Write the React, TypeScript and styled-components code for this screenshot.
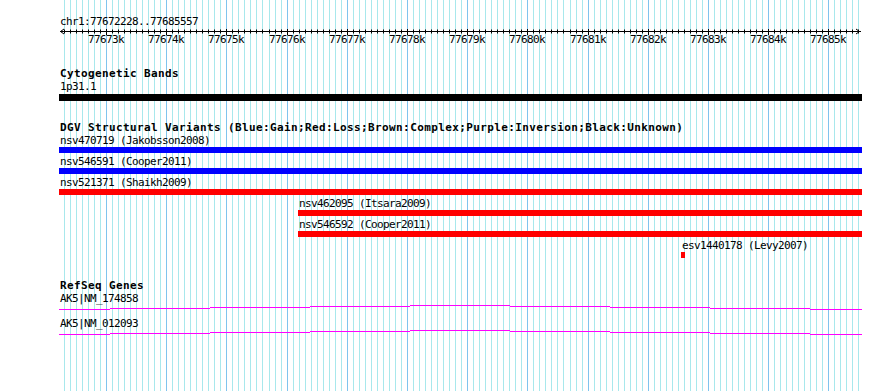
import React from "react";
import styled, { createGlobalStyle } from "styled-components";

const START = 77672228;
const END = 77685557;
const ORIGIN = 59;
const TRACK_WIDTH = 803;
const PX_PER_BP = 0.0602;

// page x of a base position, snapped to the pixel grid
const pageX = (pos: number) => Math.round(ORIGIN + 0.5 + (pos - START) * PX_PER_BP);

const GlobalStyle = createGlobalStyle`
  html, body {
    margin: 0;
    padding: 0;
    background: #ffffff;
  }
`;

const Page = styled.div`
  position: relative;
  width: 890px;
  height: 391px;
  overflow: hidden;
  background: #ffffff;
`;

const GridLayer = styled.svg`
  position: absolute;
  left: 0;
  top: 0;
  z-index: 0;
`;

const Tracks = styled.div`
  position: relative;
  z-index: 1;
  display: flex;
  flex-direction: column;
  width: ${TRACK_WIDTH}px;
  padding: 15px 0 0 ${ORIGIN}px;
`;

const Label = styled.div`
  height: 13px;
  padding-left: 1px;
  font-family: "DejaVu Sans Mono", "Liberation Mono", monospace;
  font-size: 11px;
  line-height: 13px;
  letter-spacing: -0.62px;
  white-space: nowrap;
  color: #000000;
`;

const TrackTitle = styled(Label)<{ $gap: number }>`
  margin-top: ${(p) => p.$gap}px;
  font-weight: bold;
  letter-spacing: 0.38px;
`;

const Ruler = styled.svg`
  display: block;
  overflow: visible;
  font-family: "DejaVu Sans Mono", "Liberation Mono", monospace;
  font-size: 11px;
  letter-spacing: -0.62px;
`;

const FeatureRow = styled.div`
  display: flex;
  flex-direction: column;
  align-items: flex-start;
  margin-bottom: 2px;
`;

const Bar = styled.div<{ $color: string; $h: number; $top: number }>`
  height: ${(p) => p.$h}px;
  margin-top: ${(p) => p.$top}px;
  background: ${(p) => p.$color};
`;

const GeneRow = styled.div`
  display: flex;
  flex-direction: column;
`;

const GeneLine = styled.svg`
  display: block;
`;

interface Feature {
  name: string;
  start: number;
  end: number;
  color: string;
}

const variants: Feature[] = [
  { name: "nsv470719 (Jakobsson2008)", start: START - 900, end: END + 900, color: "#0000ff" },
  { name: "nsv546591 (Cooper2011)", start: START - 400, end: END + 2000, color: "#0000ff" },
  { name: "nsv521371 (Shaikh2009)", start: START - 1500, end: END + 700, color: "#ff0000" },
  { name: "nsv462095 (Itsara2009)", start: 77676198, end: END + 3100, color: "#ff0000" },
  { name: "nsv546592 (Cooper2011)", start: 77676198, end: END + 2000, color: "#ff0000" },
  { name: "esv1440178 (Levy2007)", start: 77682544, end: 77682610, color: "#ff0000" },
];

const genes = ["AK5|NM_174858", "AK5|NM_012093"];

// exon steps of the gene glyph, in px offset from the track origin
const GENE_STEPS = [0, 51, 151, 251, 351, 451, 551, 651, 751, TRACK_WIDTH];
const GENE_LEVELS = [4, 3, 2, 1, 0, 1, 2, 3, 4];

const gridPositions: number[] = [];
for (let p = Math.ceil(START / 100) * 100; p < END; p += 100) gridPositions.push(p);

const span = (f: Feature) => {
  const left = Math.max(0, pageX(f.start) - ORIGIN);
  const right = Math.min(TRACK_WIDTH, pageX(f.end) - ORIGIN);
  return { left, width: Math.max(4, right - left) };
};

const ScaleBar = () => (
  <Ruler width={TRACK_WIDTH} height={20}>
    <line x1={1} y1={3.5} x2={TRACK_WIDTH - 1} y2={3.5} stroke="#000" />
    <polyline points="5,1 1.5,3.5 5,6" fill="none" stroke="#000" />
    <polyline points={`${TRACK_WIDTH - 6},1 ${TRACK_WIDTH - 2.5},3.5 ${TRACK_WIDTH - 6},6`} fill="none" stroke="#000" />
    {gridPositions.map((p) => {
      const x = pageX(p) - ORIGIN + 0.5;
      const major = p % 1000 === 0;
      return <line key={p} x1={x} x2={x} y1={major ? 1 : 1.5} y2={major ? 7 : 5.5} stroke="#000" />;
    })}
    {gridPositions
      .filter((p) => p % 1000 === 0)
      .map((p) => (
        <text key={p} x={pageX(p) - ORIGIN} y={15} textAnchor="middle" fill="#000">
          {p / 1000}k
        </text>
      ))}
  </Ruler>
);

export default function App() {
  return (
    <Page>
      <GlobalStyle />
      <GridLayer width={890} height={391}>
        {gridPositions.map((p) => {
          const x = pageX(p) + 0.5;
          return (
            <line key={p} x1={x} x2={x} y1={0} y2={391} stroke={p % 1000 === 0 ? "#80c4ee" : "#a8e8ec"} />
          );
        })}
      </GridLayer>
      <Tracks>
        <Label>chr1:{START}..{END}</Label>
        <ScaleBar />

        <TrackTitle $gap={19}>Cytogenetic Bands</TrackTitle>
        <FeatureRow>
          <Label>1p31.1</Label>
          <Bar $color="#000000" $h={7} $top={1} style={{ width: TRACK_WIDTH }} />
        </FeatureRow>

        <TrackTitle $gap={18}>
          DGV Structural Variants (Blue:Gain;Red:Loss;Brown:Complex;Purple:Inversion;Black:Unknown)
        </TrackTitle>
        {variants.map((f) => {
          const { left, width } = span(f);
          return (
            <FeatureRow key={f.name} style={{ marginLeft: left }}>
              <Label>{f.name}</Label>
              <Bar $color={f.color} $h={6} $top={0} style={{ width }} />
            </FeatureRow>
          );
        })}

        <TrackTitle $gap={19}>RefSeq Genes</TrackTitle>
        {genes.map((g) => (
          <GeneRow key={g}>
            <Label>{g}</Label>
            <GeneLine width={TRACK_WIDTH} height={12}>
              {GENE_LEVELS.map((lv, i) => (
                <line
                  key={i}
                  x1={GENE_STEPS[i]}
                  x2={GENE_STEPS[i + 1]}
                  y1={lv + 0.5}
                  y2={lv + 0.5}
                  stroke="#ff00ff"
                />
              ))}
            </GeneLine>
          </GeneRow>
        ))}
      </Tracks>
    </Page>
  );
}
